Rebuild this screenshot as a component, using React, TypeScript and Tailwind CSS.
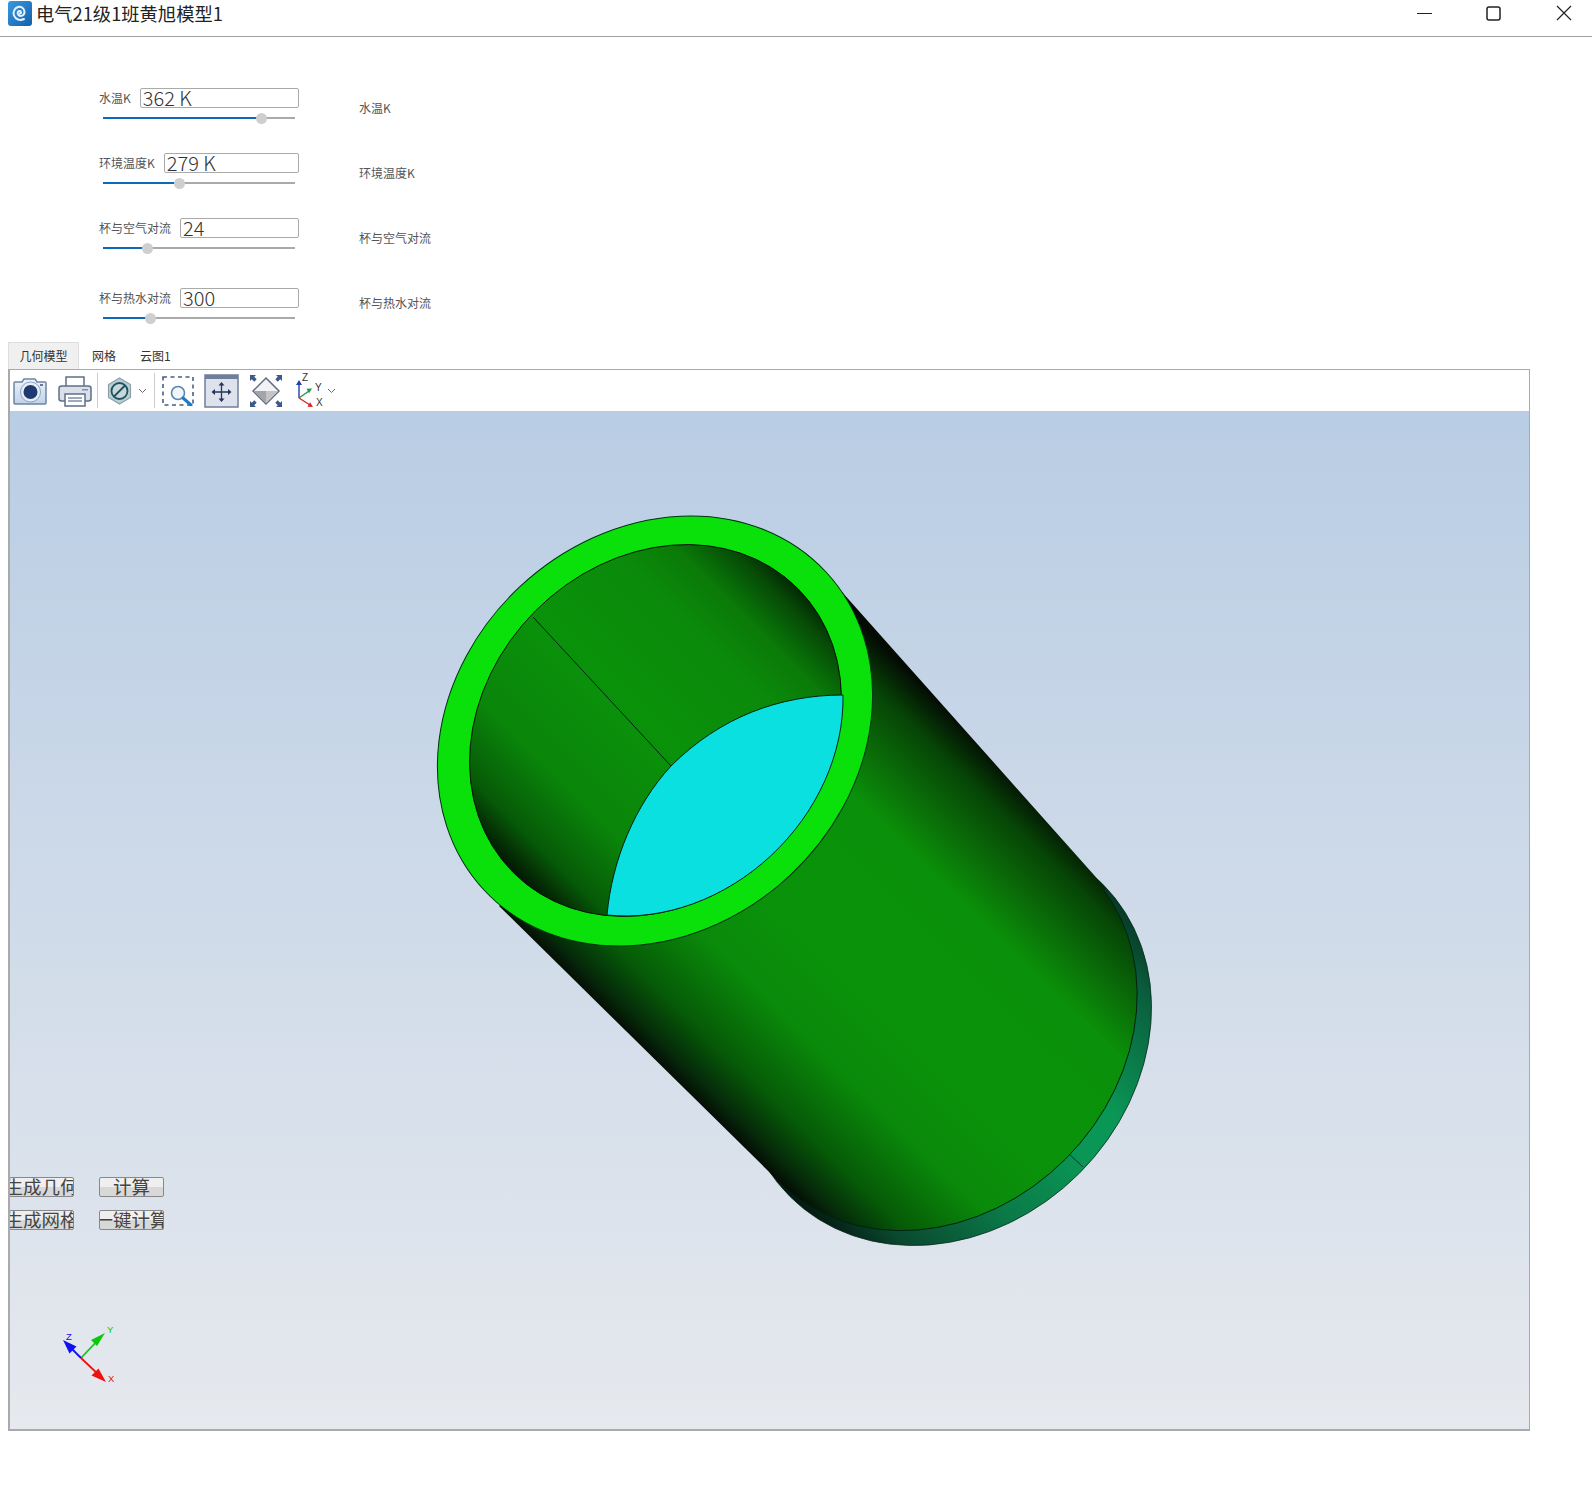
import React from 'react';

const cjk = { fontFamily: '"Noto Sans CJK SC", "Noto Sans", sans-serif' };

const rows = [
  { label: '水温K', value: '362 K', percent: 82.8 },
  { label: '环境温度K', value: '279 K', percent: 39.6 },
  { label: '杯与空气对流', value: '24', percent: 23.4 },
  { label: '杯与热水对流', value: '300', percent: 24.5 },
];

const SliderRow = ({ label, value, percent, last }: { label: string; value: string; percent: number; last: boolean }) => (
  <div className={last ? 'flex h-[43px] mt-[27px]' : 'flex h-[43px] mt-[22px] first:mt-0'}>
    <div className="w-[200px]">
      <div className="flex items-center h-[20px] gap-[9px]">
        <span className="text-[12px] text-[#555] whitespace-nowrap leading-none">{label}</span>
        <div className="flex-1 h-[20px] border border-[#aaa] rounded-[2px] pl-[2px] text-[20px] leading-[18px] text-[#333] font-light">
          {value}
        </div>
      </div>
      <div className="relative mt-[9px] mx-[4px] h-[2px] bg-[#aaa]">
        <div className="h-full bg-[#1068b8]" style={{ width: `${percent}%` }} />
        <div className="absolute top-[-4.500px] w-[11px] h-[11px] rounded-full bg-[#cfcfcf]" style={{ left: `calc(${percent}% - 5.500px)` }} />
      </div>
    </div>
    <div className={last ? 'ml-[60px] mt-[7px] text-[12px] text-[#555] whitespace-nowrap leading-[16px]' : 'ml-[60px] mt-[12px] text-[12px] text-[#555] whitespace-nowrap leading-[16px]'}>{label}</div>
  </div>
);

const Chevron = () => (
  <svg width="9" height="6" viewBox="0 0 9 6" className="shrink-0">
    <path d="M1 1l3.5 3.5L8 1" fill="none" stroke="#667" strokeWidth="1" />
  </svg>
);

const Sep = () => <div className="w-[1px] h-[35px] bg-[#ccc] shrink-0" />;

const Camera = () => (
  <svg width="34" height="28" viewBox="0 0 34 28">
    <defs>
      <linearGradient id="cam" x1="0" y1="0" x2="0" y2="1">
        <stop offset="0" stopColor="#eef3f9" />
        <stop offset="1" stopColor="#bfd2ea" />
      </linearGradient>
    </defs>
    <path d="M2 5h7l2-3h11l2 3h8a1.5 1.5 0 011 1v20a1.5 1.5 0 01-1 1H2a1.5 1.5 0 01-1-1V6a1.5 1.5 0 011-1z" fill="url(#cam)" stroke="#6f84a4" strokeWidth="1.5" />
    <circle cx="17.500" cy="15" r="10" fill="#e8eef6" stroke="#8ea2bf" strokeWidth="1" />
    <circle cx="17.500" cy="15" r="7" fill="#1f3a70" />
    <rect x="27" y="7" width="3" height="2" fill="#64789a" />
  </svg>
);

const Printer = () => (
  <svg width="34" height="32" viewBox="0 0 34 32">
    <path d="M8 11V2h18v9" fill="#fff" stroke="#5f6f87" strokeWidth="1.5" />
    <rect x="1" y="11" width="32" height="15" rx="2.5" fill="#d9e0ea" stroke="#5f6f87" strokeWidth="1.5" />
    <rect x="24" y="14" width="6" height="1.5" fill="#8090a8" />
    <rect x="7" y="19" width="20" height="12" fill="#fff" stroke="#5f6f87" strokeWidth="1.5" />
    <path d="M10 23h14M10 26h14" stroke="#8090a8" strokeWidth="1.5" />
  </svg>
);

const NoSign = () => (
  <svg width="25" height="28" viewBox="0 0 25 28">
    <path d="M12.500 1l11 6.500v13l-11 6.500-11-6.500v-13z" fill="#b9cdd2" stroke="#8aa3aa" strokeWidth="1.2" />
    <circle cx="12.500" cy="14" r="8" fill="#c9d6da" stroke="#1e5260" strokeWidth="1.8" />
    <path d="M7 19.500L18 8.500" stroke="#1e5260" strokeWidth="1.8" />
  </svg>
);

const ZoomBox = () => (
  <svg width="32" height="30" viewBox="0 0 32 30">
    <rect x="1" y="1" width="30" height="28" fill="none" stroke="#4a5f80" strokeWidth="1.6" strokeDasharray="4 3.5" />
    <circle cx="16" cy="17" r="6.500" fill="#eef5fb" stroke="#5f86b0" strokeWidth="1.6" />
    <path d="M21 22l8 7" stroke="#1f78c8" strokeWidth="3" strokeLinecap="round" />
  </svg>
);

const FitBox = () => (
  <svg width="35" height="34" viewBox="0 0 35 34">
    <rect x="1" y="1" width="33" height="32" fill="#dde2ec" stroke="#6f7f9c" strokeWidth="1.5" />
    <rect x="1" y="1" width="33" height="4" fill="#6f7f9c" />
    <path d="M17.500 10v16M9.500 18h16" stroke="#24365c" strokeWidth="1.3" />
    <path d="M17.500 8l-3 3.500h6zM17.500 28l-3-3.500h6zM7.500 18l3.500-3v6zM27.500 18l-3.500-3v6z" fill="#24365c" />
  </svg>
);

const Diamond = () => (
  <svg width="34" height="34" viewBox="0 0 34 34">
    <path d="M17 4L30 17 17 30 4 17z" fill="#f2f2f4" stroke="#606c82" strokeWidth="1.5" />
    <path d="M4.800 17h12.200v12.200z" fill="#a4a4a8" />
    <path d="M17 17h12.200L17 29.200z" fill="#c4c4c8" />
    <path d="M1 7V1h6l-1.800 1.800 2.500 2.500-2.400 2.400-2.500-2.500zM33 7V1h-6l1.800 1.800-2.500 2.500 2.400 2.400 2.500-2.500zM1 27v6h6l-1.800-1.800 2.500-2.500-2.400-2.400-2.500 2.500zM33 27v6h-6l1.800-1.800-2.500-2.500 2.400-2.400 2.500 2.500z" fill="#3b5a8a" />
  </svg>
);

const AxesTool = () => (
  <svg width="30" height="36" viewBox="0 0 30 36">
    <path d="M4 25V10" stroke="#1f3fae" strokeWidth="1.4" />
    <path d="M4 7l-3 5h6z" fill="#1f3fae" />
    <path d="M4 25l10-7" stroke="#1d9a4a" strokeWidth="1.4" />
    <path d="M17 15.500l-5.500 .3 2.600 4.400z" fill="#1d9a4a" />
    <path d="M4 25l11 7" stroke="#d62828" strokeWidth="1.4" />
    <path d="M18 34l-5.500-.3 2.600-4.400z" fill="#d62828" />
    <text x="7" y="8" fontSize="10" fill="#333" fontFamily="Liberation Sans">Z</text>
    <text x="20" y="18" fontSize="10" fill="#333" fontFamily="Liberation Sans">Y</text>
    <text x="21" y="33" fontSize="10" fill="#333" fontFamily="Liberation Sans">X</text>
  </svg>
);

// cylinder is drawn in page px, the viewBox starts at the view's origin.
// ellipses are arc paths (not rotated <ellipse>) so the gradients stay in page space
const Cylinder = () => (
  <svg width="1519" height="1019" viewBox="10 411 1519 1019" className="absolute left-0 top-0">
    <defs>
      <linearGradient id="body" gradientUnits="userSpaceOnUse" x1="640" y1="1048" x2="960" y2="720">
        <stop offset="0" stopColor="#050a05" />
        <stop offset="0.04" stopColor="#052a0a" />
        <stop offset="0.12" stopColor="#065a07" />
        <stop offset="0.27" stopColor="#0a8a0a" />
        <stop offset="0.45" stopColor="#0a930a" />
        <stop offset="0.72" stopColor="#0a900a" />
        <stop offset="0.82" stopColor="#0a6a08" />
        <stop offset="0.92" stopColor="#064406" />
        <stop offset="1" stopColor="#040a04" />
      </linearGradient>
      <linearGradient id="bore" gradientUnits="userSpaceOnUse" x1="502" y1="883" x2="809" y2="576">
        <stop offset="0" stopColor="#030803" />
        <stop offset="0.04" stopColor="#041a04" />
        <stop offset="0.12" stopColor="#065a07" />
        <stop offset="0.26" stopColor="#0a850a" />
        <stop offset="0.5" stopColor="#0a920a" />
        <stop offset="0.73" stopColor="#0a8a0a" />
        <stop offset="0.83" stopColor="#0a7a08" />
        <stop offset="0.92" stopColor="#064a06" />
        <stop offset="1" stopColor="#030803" />
      </linearGradient>
      <linearGradient id="rim" gradientUnits="userSpaceOnUse" x1="640" y1="1048" x2="960" y2="720">
        <stop offset="0" stopColor="#051a12" />
        <stop offset="0.1" stopColor="#0a4a30" />
        <stop offset="0.3" stopColor="#0a7a48" />
        <stop offset="0.5" stopColor="#0a9655" />
        <stop offset="0.62" stopColor="#0a9655" />
        <stop offset="0.85" stopColor="#0a5f3e" />
        <stop offset="1" stopColor="#052a1c" />
      </linearGradient>
    </defs>
    <path d="M789.73 1196.27A221 188 -45 1 1 1102.27 883.73A221 188 -45 1 1 789.73 1196.27z" fill="url(#rim)" stroke="#062a1a" strokeWidth="0.8" />
    <path d="M1068 1153L1083 1167" stroke="#0a3a28" strokeWidth="1" />
    <path d="M779.14 1182.36A219 186 -45 1 1 1088.86 872.64A219 186 -45 1 1 779.14 1182.36z" fill="url(#body)" stroke="#021" strokeWidth="1" />
    <path d="M842 592L1106 888.500 934 1027.500 786 1188.500 499 906z" fill="url(#body)" />
    <ellipse cx="655" cy="731" rx="233.500" ry="197.700" transform="rotate(-43 655 731)" fill="#0ae00a" stroke="#031" strokeWidth="1" />
    <path d="M513.37 872.63A201 169.4 -45 1 1 797.63 588.37A201 169.4 -45 1 1 513.37 872.63z" fill="url(#bore)" stroke="#010" strokeWidth="1" />
    <path d="M533 617L671 766" stroke="#021" strokeWidth="1" />
    <path d="M607 915C612 860 635 805 671 766 720 717 780 695 843 695A201 169.4 -45 0 1 607 915z" fill="#0ae0e0" stroke="#021" strokeWidth="1" />
  </svg>
);

const Triad = () => (
  <svg width="70" height="80" viewBox="0 0 70 80" className="absolute left-[50px] top-[916px]">
    <path d="M21 31L40 11" stroke="#0ac80a" strokeWidth="1.8" />
    <path d="M45 6L31 13l6 6z" fill="#0ac80a" />
    <path d="M21 31L8 18" stroke="#1010f0" strokeWidth="1.8" />
    <path d="M3 13l13.500 6.500-7 7z" fill="#1010f0" />
    <path d="M21 31L40 49" stroke="#f01010" strokeWidth="1.8" />
    <path d="M46 55l-14.500-6.500 7-7z" fill="#f01010" />
    <text x="47" y="6" fontSize="9.500" fill="#0ac80a" fontFamily="Liberation Sans">Y</text>
    <text x="6" y="13" fontSize="9.500" fill="#1010f0" fontFamily="Liberation Sans">Z</text>
    <text x="48" y="55" fontSize="9.500" fill="#f01010" fontFamily="Liberation Sans">X</text>
  </svg>
);

const ActionButton = ({ text, className }: { text: string; className: string }) => (
  <div className={`absolute w-[65px] h-[20px] overflow-hidden flex justify-center border border-[#888] rounded-[2px] bg-gradient-to-b from-[#efefef] from-50% to-[#d8d8d8] to-50% text-[18.500px] leading-[17px] text-[#444] whitespace-nowrap ${className}`}>
    {text}
  </div>
);

export default function App() {
  return (
    <div className="w-[1592px] h-[1486px] bg-white overflow-hidden" style={cjk}>
      {/* title bar */}
      <div className="flex items-center h-[37px] border-b border-[#a0a0a0] pb-[10px] pl-[8px]">
        <div className="w-[24px] h-[25px] rounded-[3px] bg-gradient-to-br from-[#3a9ae0] to-[#1260ac] flex items-center justify-center">
          <svg width="18" height="18" viewBox="0 0 18 18">
            <path d="M9 9.500c1.500 0 1.500-2.500-.5-2.500C6.500 7 6 9.500 7.500 11c2 2 6 .5 6-3S10 2 7 3 1.500 7.500 3 11.500 9 17 13 15" fill="none" stroke="#e8f2fb" strokeWidth="2" strokeLinecap="round" />
          </svg>
        </div>
        <span className="ml-[4px] text-[18.300px] leading-[24px] text-[#222] whitespace-nowrap">电气21级1班黄旭模型1</span>
        <div className="ml-auto flex items-center pr-[20px]">
          <svg width="15" height="15" viewBox="0 0 15 15" className="mr-[54px]"><path d="M0 7.500h15" stroke="#222" strokeWidth="1" /></svg>
          <svg width="15" height="15" viewBox="0 0 15 15" className="mr-[55px]"><rect x="1" y="1" width="13" height="13" rx="2" fill="none" stroke="#222" strokeWidth="1.5" /></svg>
          <svg width="16" height="16" viewBox="0 0 16 16"><path d="M1 1l14 14M15 1L1 15" stroke="#222" strokeWidth="1.2" /></svg>
        </div>
      </div>

      {/* parameter sliders */}
      <div className="pl-[99px] pt-[51px]">
        {rows.map((r, i) => (
          <SliderRow key={r.label} label={r.label} value={r.value} percent={r.percent} last={i === 3} />
        ))}
      </div>

      {/* tabs */}
      <div className="flex items-stretch h-[27px] mt-[11px] ml-[8px] text-[12px] text-[#333]">
        <div className="w-[71px] border border-b-0 border-[#ddd] bg-[#f0f0f0] flex items-center justify-center">几何模型</div>
        <div className="ml-[13px] flex items-center">网格</div>
        <div className="ml-[24px] flex items-center">云图1</div>
      </div>

      {/* 3d view panel */}
      <div className="ml-[8px] w-[1522px] h-[1062px] border-2 border-t border-r border-[#aaa] flex flex-col">
        <div className="flex items-center h-[41px] shrink-0 pl-[3px]">
          <Camera />
          <div className="ml-[11px]"><Printer /></div>
          <div className="ml-[5px]"><Sep /></div>
          <div className="ml-[9px]"><NoSign /></div>
          <div className="ml-[6px]"><Chevron /></div>
          <div className="ml-[7px]"><Sep /></div>
          <div className="ml-[7px]"><ZoomBox /></div>
          <div className="ml-[10px]"><FitBox /></div>
          <div className="ml-[10px]"><Diamond /></div>
          <div className="ml-[12px]"><AxesTool /></div>
          <div className="ml-[2px]"><Chevron /></div>
        </div>
        <div className="relative flex-1 bg-gradient-to-b from-[#b9cde4] to-[#e6e9ee] overflow-hidden">
          <Cylinder />
          <ActionButton text="生成几何" className="left-[-1px] top-[766px]" />
          <ActionButton text="计算" className="left-[89px] top-[766px]" />
          <ActionButton text="生成网格" className="left-[-1px] top-[799px]" />
          <ActionButton text="一键计算" className="left-[89px] top-[799px]" />
          <Triad />
        </div>
      </div>
    </div>
  );
}
